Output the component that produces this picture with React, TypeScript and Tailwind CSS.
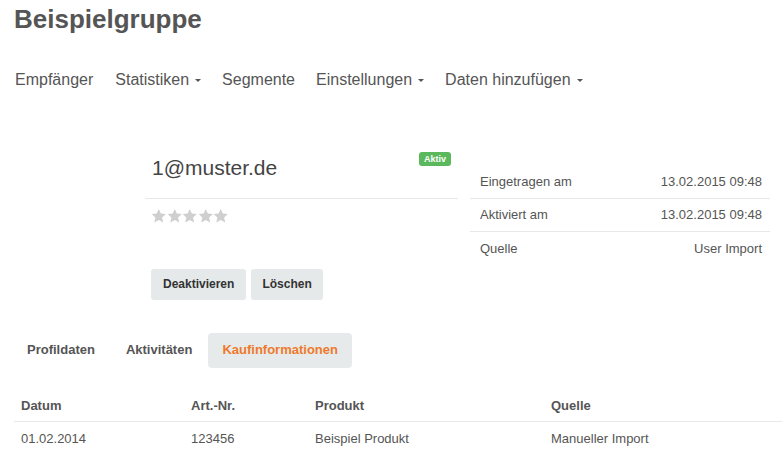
import React from "react";

const navItems = [
  { label: "Empfänger", caret: false },
  { label: "Statistiken", caret: true },
  { label: "Segmente", caret: false },
  { label: "Einstellungen", caret: true },
  { label: "Daten hinzufügen", caret: true },
];

const infoRows = [
  { label: "Eingetragen am", value: "13.02.2015 09:48" },
  { label: "Aktiviert am", value: "13.02.2015 09:48" },
  { label: "Quelle", value: "User Import" },
];

const Star = () => (
  <svg width="15.5" height="15.5" viewBox="0 0 24 24" className="fill-[#cfcfcf]">
    <path d="M12 1.5l3.2 7.1 7.8.8-5.8 5.2 1.7 7.7L12 18.4l-6.9 3.9 1.7-7.7L1 9.4l7.8-.8z" />
  </svg>
);

export default function App() {
  return (
    <div className="w-[782px] h-[464px] overflow-hidden bg-white text-[#555] font-['Liberation_Sans',Arial,sans-serif]">
      {/* Header */}
      <h1 className="pl-[14px] pt-[3px] text-[26px] leading-[32px] font-bold text-[#555]">Beispielgruppe</h1>

      {/* Navigation */}
      <nav className="flex gap-[21px] pl-[15px] mt-[35px] text-[16px] leading-[20px]">
        {navItems.map((item, i) => (
          <div key={item.label} className={`flex items-center ${i === 0 ? "pr-[1px]" : ""}`}>
            <span>{item.label}</span>
            {item.caret && (
              <span className="ml-[6px] mt-[1px] w-0 h-0 border-l-[3px] border-r-[3px] border-t-[3px] border-l-transparent border-r-transparent border-t-[#555]" />
            )}
          </div>
        ))}
      </nav>

      {/* Profile */}
      <section className="flex mt-[61px] pl-[145px]">
        <div className="w-[313px]">
          <div className="flex justify-between items-start h-[48px] border-b border-[#e8e8e8]">
            <span className="pl-[7px] pt-[4px] text-[21px] leading-[26px] text-[#444]">1@muster.de</span>
            <span className="mt-[1px] mr-[7px] rounded-[3px] bg-[#5cb85c] px-[5px] py-[2px] text-[9px] leading-[10px] font-bold text-white">
              Aktiv
            </span>
          </div>
          <div className="flex pl-[6px] pt-[9px]">
            {[0, 1, 2, 3, 4].map((i) => (
              <Star key={i} />
            ))}
          </div>
          <div className="flex gap-[5px] pl-[6px] mt-[45px]">
            <button className="h-[31px] px-[12px] rounded-[3px] bg-[#e5e9ea] text-[12px] font-bold text-[#333]">
              Deaktivieren
            </button>
            <button className="h-[31px] px-[11px] rounded-[3px] bg-[#e5e9ea] text-[12px] font-bold text-[#333]">
              Löschen
            </button>
          </div>
        </div>

        <div className="w-[300px] ml-[12px] mt-[15px] text-[13px] leading-[16px]">
          {infoRows.map((row, i) => (
            <div
              key={row.label}
              className={`flex justify-between h-[33px] items-center pl-[10px] pr-[8px] ${i < infoRows.length - 1 ? "border-b border-[#e8e8e8]" : ""}`}
            >
              <span>{row.label}</span>
              <span>{row.value}</span>
            </div>
          ))}
        </div>
      </section>

      {/* Tabs */}
      <div className="flex items-center mt-[33px] pl-[14px] text-[13px] font-bold">
        <div className="h-[35px] flex items-center px-[13px]">Profildaten</div>
        <div className="h-[35px] flex items-center px-[13px] ml-[5px]">Aktivitäten</div>
        <div className="h-[35px] flex items-center px-[14px] ml-[3px] rounded-[4px] bg-[#e6eaea] text-[#ee7a2c]">
          Kaufinformationen
        </div>
      </div>

      {/* Purchases table */}
      <table className="table-fixed ml-[14px] mt-[22px] w-[768px] text-[13px] border-collapse">
        <thead>
          <tr className="border-b border-[#e8e8e8] text-left">
            <th className="w-[177px] pl-[7px] h-[32px] font-bold">Datum</th>
            <th className="w-[124px] h-[32px] font-bold">Art.-Nr.</th>
            <th className="w-[236px] h-[32px] font-bold">Produkt</th>
            <th className="h-[32px] font-bold">Quelle</th>
          </tr>
        </thead>
        <tbody>
          <tr>
            <td className="pl-[7px] h-[33px]">01.02.2014</td>
            <td>123456</td>
            <td>Beispiel Produkt</td>
            <td>Manueller Import</td>
          </tr>
        </tbody>
      </table>
    </div>
  );
}
